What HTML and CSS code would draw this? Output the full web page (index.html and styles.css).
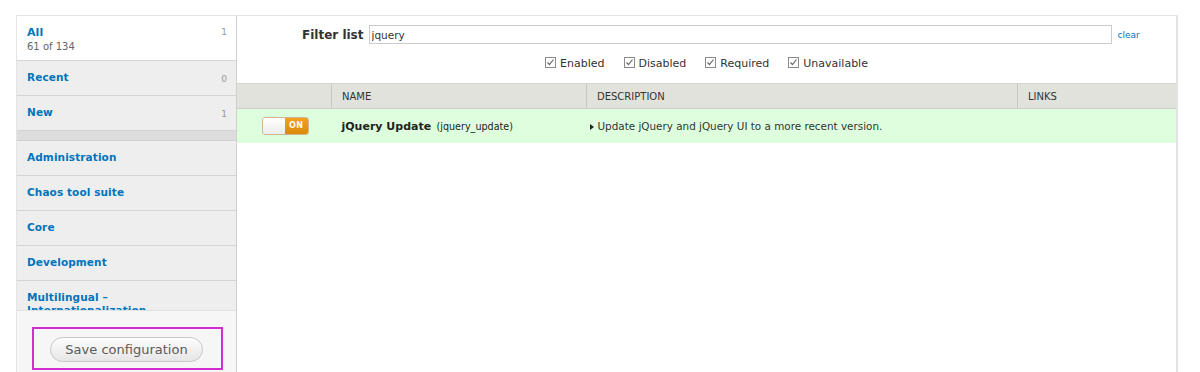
FILE: index.html
```html
<!DOCTYPE html>
<html lang="en">
<head>
    <meta charset="UTF-8">
    <title>Modules</title>
    <link rel="stylesheet" href="styles.css">
</head>
<body>
    <div class="frame">
        <div class="sidebar">
            <ul class="tabs">
                <li class="tab selected">
                    <div class="tab-text">
                        <a href="#">All</a>
                        <span class="summary">61 of 134</span>
                    </div>
                    <span class="count">1</span>
                </li>
                <li class="tab"><div class="tab-text"><a href="#">Recent</a></div><span class="count">0</span></li>
                <li class="tab"><div class="tab-text"><a href="#">New</a></div><span class="count">1</span></li>
                <li class="tab-sep"></li>
                <li class="tab"><div class="tab-text"><a href="#">Administration</a></div></li>
                <li class="tab"><div class="tab-text"><a href="#">Chaos tool suite</a></div></li>
                <li class="tab"><div class="tab-text"><a href="#">Core</a></div></li>
                <li class="tab"><div class="tab-text"><a href="#">Development</a></div></li>
                <li class="tab"><div class="tab-text"><a href="#">Multilingual – Internationalization</a></div></li>
                <li class="tab"><div class="tab-text"><a href="#">Other</a></div></li>
            </ul>
            <div class="save-area">
                <div class="highlight">
                    <button class="save-btn">Save configuration</button>
                </div>
            </div>
        </div>
        <div class="main">
            <div class="filter-row">
                <label class="filter-label" for="filter">Filter list</label>
                <input type="text" id="filter" class="filter-input" value="jquery">
                <a href="#" class="clear-link">clear</a>
            </div>
            <div class="checks">
                <label class="check"><svg width="11" height="11" viewBox="0 0 11 11"><rect x="0.5" y="0.5" width="10" height="10" fill="#fff" stroke="#8a8a8a"/><path d="M2.5 5.5 L4.5 7.5 L8.5 2.5" fill="none" stroke="#6a6a6a" stroke-width="1.2"/></svg>Enabled</label>
                <label class="check"><svg width="11" height="11" viewBox="0 0 11 11"><rect x="0.5" y="0.5" width="10" height="10" fill="#fff" stroke="#8a8a8a"/><path d="M2.5 5.5 L4.5 7.5 L8.5 2.5" fill="none" stroke="#6a6a6a" stroke-width="1.2"/></svg>Disabled</label>
                <label class="check"><svg width="11" height="11" viewBox="0 0 11 11"><rect x="0.5" y="0.5" width="10" height="10" fill="#fff" stroke="#8a8a8a"/><path d="M2.5 5.5 L4.5 7.5 L8.5 2.5" fill="none" stroke="#6a6a6a" stroke-width="1.2"/></svg>Required</label>
                <label class="check"><svg width="11" height="11" viewBox="0 0 11 11"><rect x="0.5" y="0.5" width="10" height="10" fill="#fff" stroke="#8a8a8a"/><path d="M2.5 5.5 L4.5 7.5 L8.5 2.5" fill="none" stroke="#6a6a6a" stroke-width="1.2"/></svg>Unavailable</label>
            </div>
            <table class="modules">
                <thead>
                    <tr>
                        <th class="col-toggle"></th>
                        <th class="col-name">Name</th>
                        <th class="col-desc">Description</th>
                        <th class="col-links">Links</th>
                    </tr>
                </thead>
                <tbody>
                    <tr class="enabled">
                        <td class="col-toggle">
                            <span class="toggle"><span class="toggle-off"></span><span class="toggle-on">ON</span></span>
                        </td>
                        <td class="col-name"><strong>jQuery Update</strong> <span class="machine">(jquery_update)</span></td>
                        <td class="col-desc"><span class="arrow"></span>Update jQuery and jQuery UI to a more recent version.</td>
                        <td class="col-links"></td>
                    </tr>
                </tbody>
            </table>
        </div>
    </div>
</body>
</html>
```

FILE: styles.css
```css
body {
    font-family: "DejaVu Sans", Verdana, sans-serif;
    margin: 0;
    padding: 0;
    background-color: #fff;
    overflow: hidden;
}
.frame {
    display: flex;
    width: 1160px;
    height: 356px;
    margin-top: 15px;
    margin-left: 16px;
    border: 1px solid #e4e4e4;
    border-bottom: none;
}
.sidebar {
    width: 219px;
    border-right: 1px solid #cfcfcf;
    display: flex;
    flex-direction: column;
}
.tabs {
    list-style-type: none;
    margin: 0;
    padding: 0;
    height: 294px;
    overflow: hidden;
}
.tab {
    display: flex;
    justify-content: space-between;
    height: 34px;
    padding: 0 9px 0 10px;
    background-color: #eeeeee;
    border-bottom: 1px solid #d4d4d4;
    box-sizing: content-box;
}
.tab.selected {
    height: 44px;
    background-color: #fff;
}
.tab-text {
    padding-top: 10px;
    display: flex;
    flex-direction: column;
}
.tab-text a {
    color: #0074bd;
    font-weight: bold;
    font-size: 10.5px;
    text-decoration: none;
    line-height: 13px;
    letter-spacing: 0.1px;
}
.selected .tab-text a {
    font-size: 11px;
}
.summary {
    color: #666;
    font-size: 10px;
    margin-top: 2px;
}
.count {
    color: #999;
    font-size: 9px;
    padding-top: 13px;
}
.selected .count {
    padding-top: 11px;
}
.tab-sep {
    height: 9px;
    background-color: #dddddd;
    border-bottom: 1px solid #d0d0d0;
}
.save-area {
    flex: 1;
    background-color: #f6f6f6;
    border-top: 1px solid #e2e2e2;
    padding: 16px 13px 0 15px;
}
.highlight {
    border: 2px solid #d12dcf;
    padding: 8px 0 6px 16px;
}
.save-btn {
    font-family: "DejaVu Sans", Verdana, sans-serif;
    font-size: 13px;
    color: #5a5a5a;
    width: 153px;
    height: 25px;
    border: 1px solid #c8c8c8;
    border-radius: 13px;
    background: linear-gradient(#fdfdfd, #e6e6e6);
    padding: 0;
}
.main {
    flex: 1;
    border-right: 1px solid #e4e4e4;
}
.filter-row {
    display: flex;
    align-items: center;
    padding: 9px 0 0 65px;
}
.filter-label {
    font-size: 12px;
    font-weight: bold;
    color: #333;
    margin-right: 5px;
}
.filter-input {
    width: 743px;
    height: 19px;
    box-sizing: border-box;
    border: 1px solid #cccccc;
    font-family: "DejaVu Sans", Verdana, sans-serif;
    font-size: 10.5px;
    color: #333;
    padding: 0 2px;
    margin: 0;
}
.clear-link {
    font-size: 9px;
    color: #0074bd;
    text-decoration: none;
    margin-left: 6px;
}
.checks {
    display: flex;
    justify-content: center;
    gap: 19px;
    padding-top: 10px;
    height: 28px;
    box-sizing: border-box;
    margin-bottom: 11px;
}
.check {
    display: flex;
    align-items: center;
    font-size: 11px;
    color: #333;
}
.check svg {
    margin-right: 4px;
    margin-top: -2px;
}
.modules {
    width: 100%;
    border-collapse: collapse;
}
.modules th {
    background-color: #e1e2dc;
    height: 24px;
    padding: 0 0 0 10px;
    text-align: left;
    font-weight: normal;
    font-size: 10px;
    color: #333;
    text-transform: uppercase;
    border-top: 1px solid #d6d6d0;
    border-bottom: 1px solid #ccc;
    border-left: 1px solid #c8c8c2;
}
.modules th:first-child {
    border-left: none;
}
.modules th.col-toggle {
    width: 84px;
}
.modules th.col-name {
    width: 244px;
}
.modules th.col-desc {
    width: 420px;
}
.modules td {
    height: 34px;
    padding: 0;
    font-size: 10.4px;
    color: #333;
}
.enabled {
    background-color: #ddffdd;
}
td.col-toggle {
    text-align: center;
}
td.col-name {
    padding-left: 10px;
    color: #222;
}
td.col-name strong {
    font-size: 11px;
    color: #222;
}
.machine {
    font-size: 9.6px;
    margin-left: 2px;
}
td.col-desc {
    padding-left: 3px;
}
.arrow {
    display: inline-block;
    width: 0;
    height: 0;
    border-top: 3px solid transparent;
    border-bottom: 3px solid transparent;
    border-left: 4px solid #222;
    margin-right: 4px;
}
.toggle {
    display: inline-flex;
    width: 47px;
    height: 18px;
    border: 1px solid #d2b58c;
    border-radius: 3px;
    overflow: hidden;
    vertical-align: middle;
    box-sizing: border-box;
    margin-left: 2px;
}
.toggle-off {
    flex: 1;
    background: linear-gradient(#fff, #ececec);
}
.toggle-on {
    width: 23px;
    background: linear-gradient(#f2a020, #dc8a0a);
    color: #fff;
    font-weight: bold;
    font-size: 8px;
    line-height: 16px;
    text-align: center;
    letter-spacing: 0.5px;
}
```
